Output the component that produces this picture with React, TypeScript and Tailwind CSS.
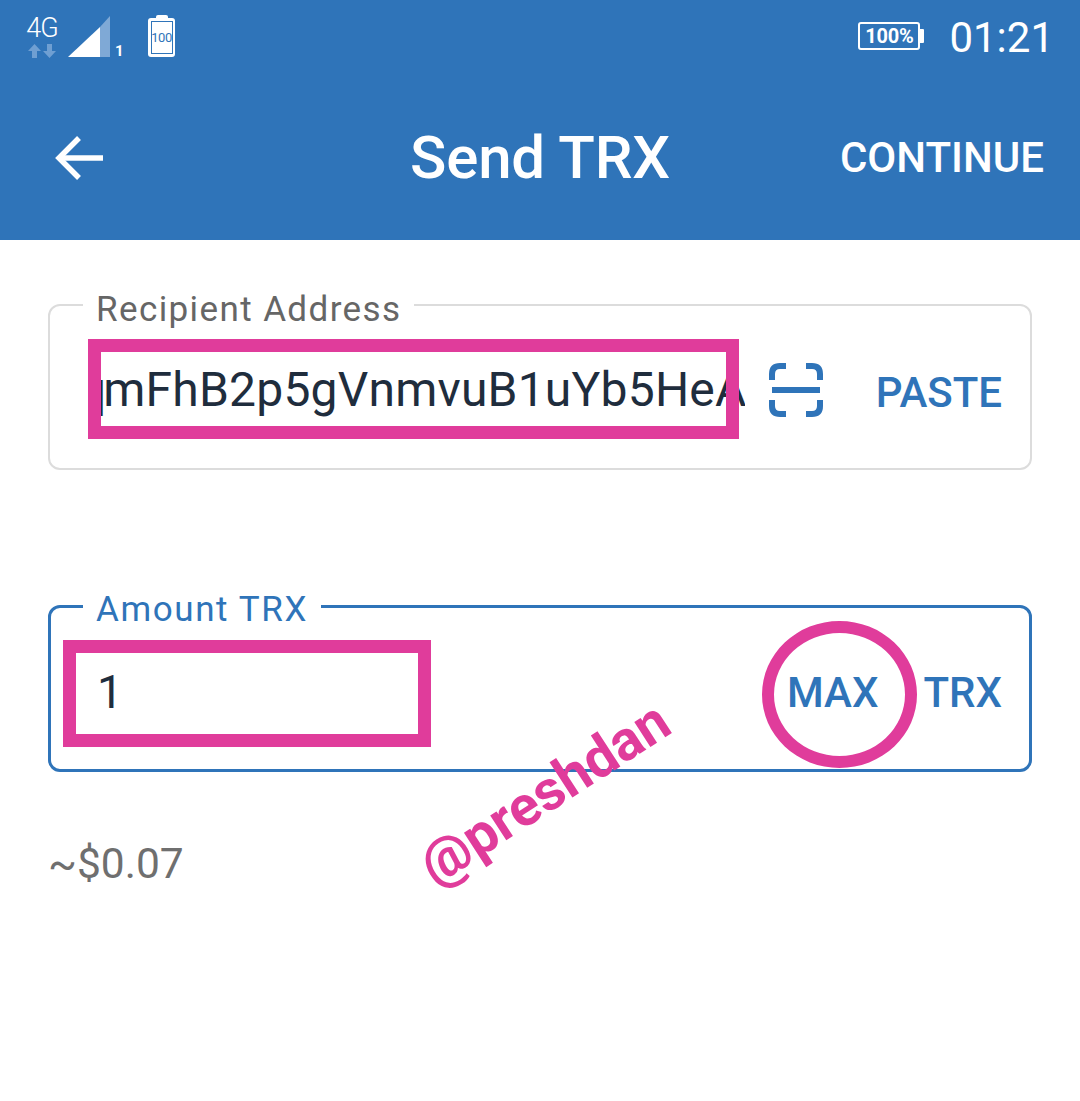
const font = "font-['Roboto','Noto_Sans',sans-serif]";

function NetworkIcon() {
  return (
    <div className="flex w-[34px] flex-col items-center">
      <span className="text-[27px] font-light leading-[27px] tracking-[-1px] text-white">4G</span>
      <svg width="30" height="15" viewBox="0 0 30 15" fill="#6f9fd2" className="mt-[1px]">
        <path d="M7.500 1 L14 8 H10 V15 H5 V8 H1 Z" />
        <path d="M22.500 15 L16 8 H20 V1 H25 V8 H29 Z" />
      </svg>
    </div>
  );
}

function SignalIcon() {
  return (
    <div className="relative h-[44px] w-[60px]">
      <svg width="44" height="44" viewBox="0 0 44 44" className="absolute left-0 top-0">
        <path d="M0 42 L32 12 V42 Z" fill="#fff" />
        <path d="M32 12 L42 1 V42 H32 Z" fill="#7fa9d6" />
      </svg>
      <span className="absolute left-[47px] top-[27px] text-[15px] font-bold leading-[18px] text-white">1</span>
    </div>
  );
}

function SimBattery() {
  return (
    <div className="flex flex-col items-center">
      <div className="h-[3px] w-[12px] rounded-t-[2px] bg-white" />
      <div className="flex h-[39px] w-[27px] items-center justify-center rounded-[3px] bg-white">
        <div className="flex h-[33px] w-[22px] items-center justify-center border border-[#2f74b9]">
          <span className="text-[13px] leading-none tracking-[-0.5px] text-[#2f74b9]">100</span>
        </div>
      </div>
    </div>
  );
}

function BackArrow() {
  return (
    <svg width="48" height="44" viewBox="0 0 48 44" fill="none" stroke="#fff" strokeWidth="5.500">
      <path d="M48 22 H4" />
      <path d="M24 2 L4 22 L24 42" />
    </svg>
  );
}

function ScanIcon() {
  return (
    <svg width="54" height="54" viewBox="0 0 54 54" fill="none" stroke="#2f74b9" strokeWidth="6">
      <path d="M3 17 V11 Q3 3 11 3 H17" />
      <path d="M37 3 H43 Q51 3 51 11 V17" />
      <path d="M3 37 V43 Q3 51 11 51 H17" />
      <path d="M37 51 H43 Q51 51 51 43 V37" />
      <path d="M3 27 H51" />
    </svg>
  );
}

export default function App() {
  return (
    <div className={`relative h-[1101px] w-[1080px] overflow-hidden bg-white ${font}`}>
      <header className="flex h-[240px] flex-col bg-[#2f74b9] text-white">
        <div className="flex h-[72px] items-start justify-between pl-[25px] pr-[26px] pt-[15px]">
          <div className="flex items-start gap-[9px]">
            <NetworkIcon />
            <SignalIcon />
            <div className="ml-[11px]">
              <SimBattery />
            </div>
          </div>
          <div className="flex items-center gap-[25px] pt-[1px]">
            <div className="-mt-[4px] flex items-center">
              <div className="flex h-[28px] w-[62px] items-center justify-center rounded-[3px] border-2 border-white">
                <span className="text-[20px] font-bold leading-none tracking-[-0.2px]">100%</span>
              </div>
              <div className="h-[14px] w-[4px] rounded-r-[1px] bg-white" />
            </div>
            <span className="text-[42px] leading-[44px]">01:21</span>
          </div>
        </div>
        <div className="grid h-[168px] grid-cols-[1fr_auto_1fr] items-center px-[36px] pt-[4px]">
          <div className="ml-[19px] justify-self-start">
            <BackArrow />
          </div>
          <span className="text-[60px] font-medium leading-[66px] tracking-[-0.2px]">Send TRX</span>
          <span className="justify-self-end text-[42px] font-medium leading-[48px]">CONTINUE</span>
        </div>
      </header>

      <main className="px-[48px] pt-[64px]">
        <section className="relative flex h-[166px] items-center rounded-[12px] border-2 border-[#dcdcdc] pl-[50px] pr-[28px] pt-[6px]">
          <span className="absolute left-[33px] top-[-16px] bg-white px-[13px] text-[35px] leading-[40px] tracking-[1.4px] text-[#666666]">
            Recipient Address
          </span>
          <div className="w-[645px] overflow-hidden whitespace-nowrap text-[48px] leading-[54px] tracking-[0.2px] text-[#1f2d3d]">
            <span className="-ml-[21px] inline-block">
              <span className="tracking-[-3px]">q</span>mFhB2p5gVnmvuB1uYb5HeA
            </span>
          </div>
          <div className="ml-[24px]">
            <ScanIcon />
          </div>
          <span className="ml-auto pt-[5px] text-[42px] font-medium leading-[48px] text-[#2f74b9]">PASTE</span>
        </section>

        <section className="relative mt-[135px] flex h-[167px] items-center justify-between rounded-[12px] border-[3px] border-[#2f74b9] pl-[46px] pr-[27px] pt-[7px]">
          <span className="absolute left-[32px] top-[-18px] bg-white px-[13px] text-[35px] leading-[40px] tracking-[1.6px] text-[#2f74b9]">
            Amount TRX
          </span>
          <span className="text-[46px] leading-[54px] text-[#1f2d3d]">1</span>
          <div className="mt-[2px] flex items-center gap-[45px] text-[42px] font-medium leading-[48px] text-[#2f74b9]">
            <span>MAX</span>
            <span>TRX</span>
          </div>
        </section>

        <p className="mt-[69px] text-[42.500px] leading-[46px] text-[#6f6f6f]">~$0.07</p>
      </main>

      {/* annotations drawn on top of the screenshot */}
      <div className="absolute left-[88px] top-[339px] h-[100px] w-[651px] border-[13px] border-[#e03c9b]" />
      <div className="absolute left-[63px] top-[640px] h-[107px] w-[368px] border-[13px] border-[#e03c9b]" />
      <div className="absolute left-[762px] top-[621px] h-[147px] w-[155px] rounded-[50%] border-[12px] border-[#e03c9b]" />
      <span className="absolute left-[402px] top-[755px] origin-center -rotate-[33deg] text-[56px] font-bold leading-[76px] text-[#e03c9b]">
        @preshdan
      </span>
    </div>
  );
}
